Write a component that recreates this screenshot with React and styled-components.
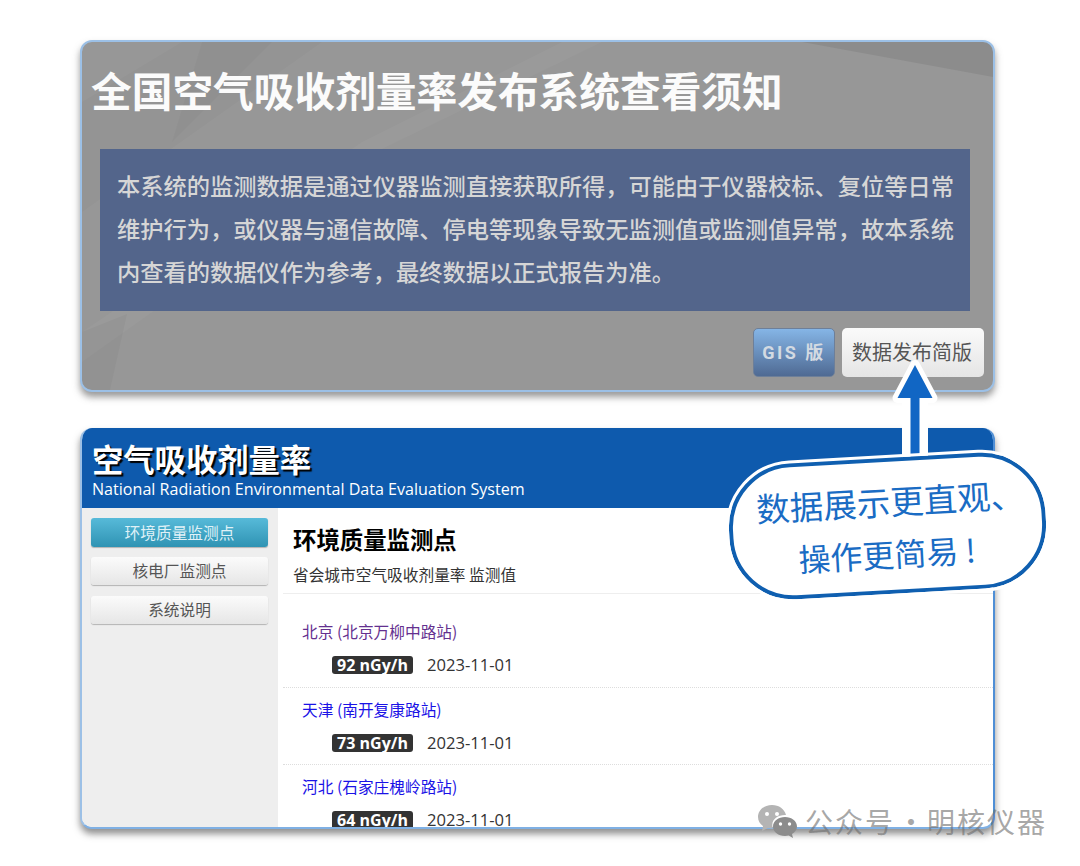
import React from 'react';
import styled, { createGlobalStyle } from 'styled-components';

const CJK = `"Noto Sans CJK SC", "Noto Sans", sans-serif`;

const GlobalStyle = createGlobalStyle`
  html, body {
    margin: 0;
    padding: 0;
    background: #fff;
    font-family: ${CJK};
  }
`;

const Page = styled.div`
  position: relative;
  width: 1080px;
  height: 866px;
  overflow: hidden;
  padding: 40px 85px 0 80px;
  box-sizing: border-box;
`;

const NoticeCard = styled.section`
  position: relative;
  isolation: isolate;
  overflow: hidden;
  box-sizing: border-box;
  height: 352px;
  padding: 0 23px 0 10px;
  border: 2px solid #9cc0e6;
  border-radius: 12px;
  box-shadow: 0 5px 7px rgba(70, 70, 70, 0.55);
  background: #979797;
`;

const NoticeTexture = styled.svg`
  position: absolute;
  left: 0;
  top: 0;
  width: 100%;
  height: 100%;
  z-index: -1;
`;

const NoticeTitle = styled.h1`
  margin: 0 0 0 -1px;
  padding-top: 18px;
  height: 86px;
  box-sizing: border-box;
  font-size: 40.7px;
  line-height: 60px;
  font-weight: 700;
  color: #fbfbfb;
  white-space: nowrap;
`;

const NoticeBody = styled.div`
  box-sizing: border-box;
  margin: 21px 0 0 8px;
  height: 162px;
  padding: 15px 0 0 17px;
  background: #53658b;
  color: #d6d6d6;
  font-size: 23.26px;
  font-weight: 500;
  line-height: 43px;
`;

const NoticeLine = styled.div`
  white-space: nowrap;
`;

const NoticeActions = styled.div`
  display: flex;
  justify-content: flex-end;
  gap: 7px;
  margin-top: 17px;
  margin-right: -14px;
`;

const GisButton = styled.div`
  box-sizing: border-box;
  width: 82px;
  height: 49px;
  border-radius: 5px;
  border: 1px solid #6d7f99;
  background: linear-gradient(#85b5e6, #4f6a93);
  color: #d3dae2;
  font-family: Roboto, ${CJK};
  font-size: 18px;
  font-weight: 700;
  letter-spacing: 2.5px;
  line-height: 47px;
  text-align: center;
  white-space: pre;
`;

const BriefButton = styled.div`
  box-sizing: border-box;
  width: 142px;
  height: 49px;
  padding-right: 2px;
  border-radius: 5px;
  background: linear-gradient(#fafafa, #e5e5e5);
  color: #555;
  font-size: 20px;
  line-height: 48px;
  text-align: center;
`;

const DataCard = styled.section`
  box-sizing: border-box;
  margin-top: 36px;
  height: 401px;
  display: flex;
  flex-direction: column;
  border: 2px solid #9cc0e6;
  border-top: 0;
  border-right-color: #4f8fd6;
  border-bottom-color: #7fb0e4;
  border-radius: 12px;
  box-shadow: 0 5px 7px rgba(70, 70, 70, 0.6);
  overflow: hidden;
  background: #fff;
`;

const DataHeader = styled.header`
  box-sizing: border-box;
  flex: none;
  height: 80px;
  padding: 10px 0 0 10px;
  background: #0e5aad;
  color: #fff;
`;

const DataTitle = styled.div`
  font-size: 31.3px;
  font-weight: 700;
  line-height: 42px;
  text-shadow: 2px 2px 1px #000;
`;

const DataSubtitle = styled.div`
  font-family: "Open Sans", sans-serif;
  font-size: 16.1px;
  line-height: 20px;
  margin-top: -1px;
  white-space: nowrap;
`;

const DataBody = styled.div`
  flex: 1;
  min-height: 0;
  display: flex;
`;

const Sidebar = styled.nav`
  box-sizing: border-box;
  flex: none;
  width: 196px;
  padding: 10px 10px 0 9px;
  display: flex;
  flex-direction: column;
  gap: 10px;
  background: #eeeeee;
`;

const NavItem = styled.div`
  height: ${(p) => (p.$active ? '29px' : '28px')};
  margin-bottom: ${(p) => (p.$active ? '0' : '1px')};
  border-radius: 3px;
  background: ${(p) =>
    p.$active ? 'linear-gradient(#57bad9, #2f93b3)' : 'linear-gradient(#fbfbfb, #e6e6e6)'};
  box-shadow: 0 1px 1px rgba(0, 0, 0, 0.25);
  color: ${(p) => (p.$active ? '#dff1f7' : '#555')};
  font-size: 15.7px;
  line-height: ${(p) => (p.$active ? '30px' : '28px')};
  text-align: center;
`;

const Main = styled.main`
  flex: 1;
  min-width: 0;
  padding-left: 5px;
`;

const MainHead = styled.div`
  box-sizing: border-box;
  height: 86px;
  padding: 12px 0 0 10px;
  border-bottom: 1px solid #eeeeee;
`;

const MainTitle = styled.h2`
  margin: 0;
  font-size: 23.4px;
  font-weight: 700;
  line-height: 38px;
  color: #000;
`;

const MainSub = styled.div`
  margin-top: 6px;
  font-size: 15.7px;
  line-height: 22px;
  color: #333;
`;

const StationList = styled.div`
  padding-top: 16px;
`;

const Station = styled.div`
  box-sizing: border-box;
  height: 77.5px;
  padding: 12px 0 0 19px;
  border-bottom: 1px dotted #ddd;
`;

const StationName = styled.div`
  font-size: 15.7px;
  line-height: 20px;
  color: ${(p) => (p.$visited ? '#64308f' : '#1a12e6')};
`;

const StationValue = styled.div`
  display: flex;
  align-items: center;
  gap: 14px;
  margin: 13px 0 0 30px;
  font-family: "Open Sans", sans-serif;
  font-size: 16.6px;
  line-height: 20px;
  color: #333;
`;

const Badge = styled.span`
  box-sizing: border-box;
  width: 81px;
  height: 18px;
  border-radius: 3px;
  background: #333;
  color: #fff;
  font-size: 16px;
  font-weight: 700;
  line-height: 18px;
  text-align: center;
  white-space: nowrap;
`;

const ArrowSvg = styled.svg`
  position: absolute;
  left: 887px;
  top: 358px;
  width: 56px;
  height: 105px;
`;

const Callout = styled.div`
  position: absolute;
  left: 729px;
  top: 458px;
  box-sizing: border-box;
  width: 317px;
  height: 136px;
  display: flex;
  flex-direction: column;
  align-items: center;
  padding-top: 13px;
  background: #fff;
  border: 4px solid #0f5fb0;
  border-radius: 64px;
  outline: 3px solid #fff;
  transform: rotate(-3.2deg);
  color: #1a6cc4;
  font-weight: 400;
  line-height: 52px;
  white-space: pre;
`;

const CalloutLine = styled.div`
  font-size: ${(p) => p.$size}px;
  transform: translateX(${(p) => p.$shift}px);
`;

const Watermark = styled.div`
  position: absolute;
  left: 757px;
  top: 803px;
  display: flex;
  align-items: center;
  gap: 7px;
  color: rgba(110, 110, 110, 0.62);
  font-size: 28px;
  line-height: 36px;
  letter-spacing: 2px;
  white-space: nowrap;
`;

const WatermarkIcon = styled.svg`
  width: 41px;
  height: 34px;
  flex: none;
`;

const WatermarkDot = styled.span`
  display: inline-block;
  width: 32px;
  text-align: center;
  letter-spacing: 0;
`;

const noticeLines = [
  '本系统的监测数据是通过仪器监测直接获取所得，可能由于仪器校标、复位等日常',
  '维护行为，或仪器与通信故障、停电等现象导致无监测值或监测值异常，故本系统',
  '内查看的数据仪作为参考，最终数据以正式报告为准。',
];

const stations = [
  { name: '北京 (北京万柳中路站)', value: '92 nGy/h', visited: true },
  { name: '天津 (南开复康路站)', value: '73 nGy/h' },
  { name: '河北 (石家庄槐岭路站)', value: '64 nGy/h' },
];

export default function App() {
  return (
    <Page>
      <GlobalStyle />

      <NoticeCard>
        <NoticeTexture viewBox="0 0 911 348" preserveAspectRatio="none">
          <path d="M0 60 L100 0 H240 L0 170 Z" fill="#000" fillOpacity="0.02" />
          <path d="M120 0 H190 L90 100 Z" fill="#000" fillOpacity="0.025" />
          <path d="M520 0 L300 107 L0 320 V290 L280 100 L480 0 Z" fill="#fff" fillOpacity="0.03" />
          <path d="M0 290 L45 272 L28 348 H0 Z" fill="#000" fillOpacity="0.03" />
          <path d="M720 0 L911 35 V0 Z" fill="#000" fillOpacity="0.07" />
        </NoticeTexture>
        <NoticeTitle>全国空气吸收剂量率发布系统查看须知</NoticeTitle>
        <NoticeBody>
          {noticeLines.map((line) => (
            <NoticeLine key={line}>{line}</NoticeLine>
          ))}
        </NoticeBody>
        <NoticeActions>
          <GisButton>GIS 版</GisButton>
          <BriefButton>数据发布简版</BriefButton>
        </NoticeActions>
      </NoticeCard>

      <DataCard>
        <DataHeader>
          <DataTitle>空气吸收剂量率</DataTitle>
          <DataSubtitle>National Radiation Environmental Data Evaluation System</DataSubtitle>
        </DataHeader>
        <DataBody>
          <Sidebar>
            <NavItem $active>环境质量监测点</NavItem>
            <NavItem>核电厂监测点</NavItem>
            <NavItem>系统说明</NavItem>
          </Sidebar>
          <Main>
            <MainHead>
              <MainTitle>环境质量监测点</MainTitle>
              <MainSub>省会城市空气吸收剂量率 监测值</MainSub>
            </MainHead>
            <StationList>
              {stations.map((s) => (
                <Station key={s.name}>
                  <StationName $visited={s.visited}>{s.name}</StationName>
                  <StationValue>
                    <Badge>{s.value}</Badge>
                    2023-11-01
                  </StationValue>
                </Station>
              ))}
            </StationList>
          </Main>
        </DataBody>
      </DataCard>

      <ArrowSvg viewBox="0 0 56 105">
        <path
          d="M28 7 L45.500 40 H10.500 Z"
          fill="#fff"
          stroke="#fff"
          strokeWidth="10"
          strokeLinejoin="round"
        />
        <rect x="15" y="40" width="26" height="65" fill="#fff" />
        <path d="M28 7 L45.500 40 H32.500 V105 H23.500 V40 H10.500 Z" fill="#1166c4" />
      </ArrowSvg>

      <Callout>
        <CalloutLine $size={33.5} $shift={4}>数据展示更直观、</CalloutLine>
        <CalloutLine $size={32} $shift={-2}>操作更简易 !</CalloutLine>
      </Callout>

      <Watermark>
        <WatermarkIcon viewBox="0 0 41 34">
          <path
            d="M15 1C7 1 1 6 1 13c0 4 2 7 5 9l-1 5 6-3c1 .3 3 .5 4 .5h1c-.5-1.2-.7-2.4-.7-3.6C15.300 15 21 11 28 11h1C27.500 5 22 1 15 1z"
            fill="#b4b4b4"
          />
          <path
            d="M28 13c-6.500 0-12 4-12 9.500S21.500 32 28 32c1.300 0 2.500-.2 3.700-.5L36 34l-1-4c3-2 5-4.500 5-7.500C40 17 34.500 13 28 13z"
            fill="#8c8c8c"
          />
          <circle cx="10" cy="10" r="2" fill="#fff" />
          <circle cx="20" cy="10" r="2" fill="#fff" />
          <circle cx="23.500" cy="20" r="1.700" fill="#fff" />
          <circle cx="32.500" cy="20" r="1.700" fill="#fff" />
        </WatermarkIcon>
        <span>公众号<WatermarkDot>·</WatermarkDot>明核仪器</span>
      </Watermark>
    </Page>
  );
}
